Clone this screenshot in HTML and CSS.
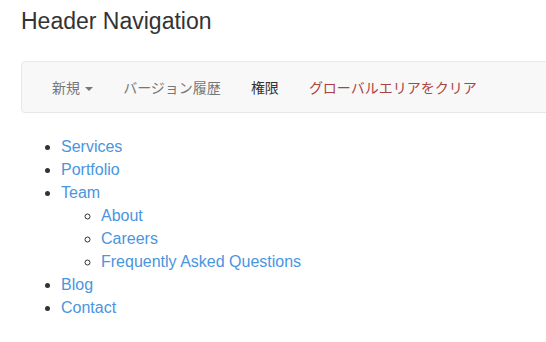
FILE: index.html
```html
<!DOCTYPE html>
<html lang="ja">
<head>
    <meta charset="UTF-8">
    <meta name="viewport" content="width=device-width, initial-scale=1.0">
    <title>Header Navigation</title>
    <link rel="stylesheet" href="styles.css">
</head>
<body>
    <div class="page">
        <h1>Header Navigation</h1>

        <nav class="navbar">
            <ul class="nav">
                <li><a href="#" class="nav-link">新規 <span class="caret"></span></a></li>
                <li><a href="#" class="nav-link">バージョン履歴</a></li>
                <li><a href="#" class="nav-link active">権限</a></li>
                <li><a href="#" class="nav-link danger">グローバルエリアをクリア</a></li>
            </ul>
        </nav>

        <ul class="menu">
            <li><a href="#">Services</a></li>
            <li><a href="#">Portfolio</a></li>
            <li><a href="#">Team</a>
                <ul>
                    <li><a href="#">About</a></li>
                    <li><a href="#">Careers</a></li>
                    <li><a href="#">Frequently Asked Questions</a></li>
                </ul>
            </li>
            <li><a href="#">Blog</a></li>
            <li><a href="#">Contact</a></li>
        </ul>
    </div>
</body>
</html>
```

FILE: styles.css
```css
html, body {
    margin: 0;
    overflow: hidden;
}
body {
    font-family: "Liberation Sans", Arial, "Noto Sans CJK JP", sans-serif;
    font-size: 14px;
    color: #333;
    background: #fff;
}
.page {
    padding: 8px 0 0 21px;
}
h1 {
    font-size: 23px;
    font-weight: normal;
    line-height: 27px;
    margin: 0 0 26px 0;
    color: #333;
}
.navbar {
    background-color: #f8f8f8;
    border: 1px solid #e7e7e7;
    border-radius: 4px;
    margin-right: -10px;
    min-height: 50px;
}
.nav {
    list-style: none;
    margin: 0;
    padding: 0 15px;
    display: flex;
}
.nav-link {
    display: block;
    padding: 15px;
    line-height: 20px;
    color: #777;
    text-decoration: none;
    font-family: "Noto Sans CJK JP", sans-serif;
    font-size: 14px;
}
.nav-link.active {
    color: #333;
}
.nav-link.danger {
    color: #a94442;
}
.caret {
    display: inline-block;
    width: 0;
    height: 0;
    margin-left: 2px;
    vertical-align: middle;
    border-top: 4px solid #777;
    border-left: 4px solid transparent;
    border-right: 4px solid transparent;
}
.menu {
    margin: 22px 0 0 0;
    padding-left: 40px;
    font-size: 16px;
    line-height: 23px;
}
.menu ul {
    margin: 0;
    padding-left: 40px;
    list-style: circle;
}
.menu a {
    color: #4a95e0;
    text-decoration: none;
}
```
